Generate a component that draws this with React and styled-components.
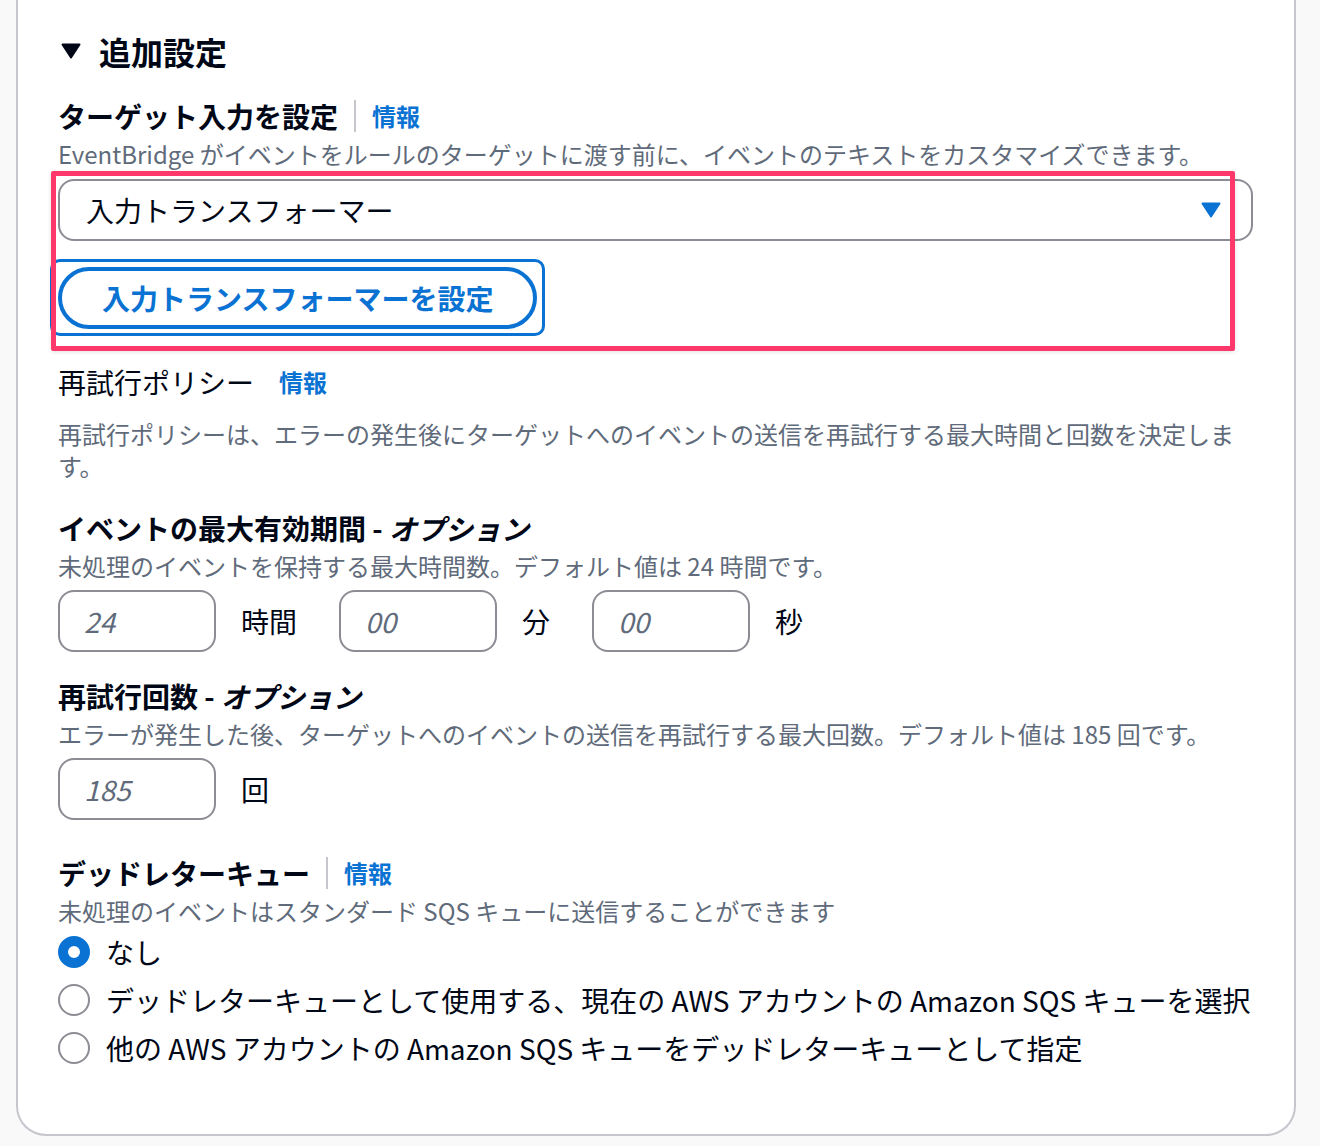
import React from "react";
import styled, { createGlobalStyle } from "styled-components";

const GlobalStyle = createGlobalStyle`
  html, body {
    margin: 0;
    padding: 0;
    background: #f9f9fa;
  }
  body {
    font-family: "Noto Sans CJK JP", "Noto Sans", sans-serif;
    color: #000716;
  }
  * { box-sizing: border-box; }
`;

const Page = styled.div`
  padding: 0 24px 10px 16px;
`;

const Card = styled.section`
  background: #ffffff;
  border: 2px solid #c6c6cd;
  border-top: none;
  border-radius: 0 0 30px 30px;
  padding: 29px 41px 64px 40px;
`;

const Heading = styled.h2`
  display: flex;
  align-items: center;
  gap: 18px;
  margin: 0;
  padding-left: 3px;
  font-size: 32px;
  line-height: 44px;
  font-weight: 700;
`;

const Label = styled.div`
  display: flex;
  align-items: center;
  margin-top: ${(p) => p.$mt || 0}px;
  font-size: 28px;
  line-height: 44px;
  font-weight: ${(p) => (p.$regular ? 400 : 700)};

  em {
    font-style: italic;
  }
`;

const Divider = styled.span`
  width: 2px;
  height: 32px;
  background: #c6c6cd;
  margin: 0 16px;
`;

const InfoLink = styled.a`
  color: #0972d3;
  font-size: 24px;
  font-weight: 700;
  text-decoration: none;
  margin-left: ${(p) => p.$ml || 0}px;
`;

const Desc = styled.p`
  margin: ${(p) => p.$mt || 0}px 0 0;
  font-size: 24px;
  line-height: 32px;
  color: #5f6b7a;
`;

const Highlighted = styled.div`
  position: relative;
  margin-top: 9px;
`;

const Annotation = styled.div`
  position: absolute;
  left: -7px;
  top: -8px;
  width: 1184px;
  height: 180px;
  border: 5px solid #ff386c;
  border-radius: 2px;
  box-shadow: 0 1px 4px rgba(0, 0, 0, 0.12);
  pointer-events: none;
  z-index: 2;
`;

const Select = styled.div`
  display: flex;
  align-items: center;
  justify-content: space-between;
  height: 62px;
  padding: 0 30px 0 26px;
  border: 2px solid #8c8c94;
  border-radius: 16px;
  font-size: 28px;
`;

const OutlineButton = styled.button`
  position: relative;
  margin-top: 26px;
  height: 62px;
  padding: 0 40px;
  border: 4px solid #0972d3;
  border-radius: 31px;
  background: #ffffff;
  color: #0972d3;
  font-family: inherit;
  font-size: 28px;
  font-weight: 700;
  line-height: 1;

  &::before {
    content: "";
    position: absolute;
    inset: -12px -12px -11px -12px;
    border: 3px solid #0972d3;
    border-radius: 10px;
  }
`;

const InputRow = styled.div`
  display: flex;
  align-items: center;
  gap: 42px;
  margin-top: 8px;
`;

const Group = styled.div`
  display: flex;
  align-items: center;
  gap: 25px;
  font-size: 28px;
`;

const NumberInput = styled.input`
  width: 158px;
  height: 62px;
  padding: 0 24px;
  border: 2px solid #8c8c94;
  border-radius: 16px;
  font-family: inherit;
  font-size: 28px;
  background: #ffffff;

  &::placeholder {
    font-style: italic;
    color: #5f6b7a;
  }
`;

const RadioList = styled.div`
  display: flex;
  flex-direction: column;
  gap: 4px;
  margin-top: 3px;
`;

const RadioRow = styled.label`
  display: flex;
  align-items: center;
  gap: 16px;
  font-size: 28px;
  line-height: 44px;
  white-space: nowrap;
`;

const RadioDot = styled.span`
  width: 32px;
  height: 32px;
  border-radius: 50%;
  flex-shrink: 0;
  background: #ffffff;
  border: ${(p) => (p.$checked ? "10px solid #0972d3" : "2px solid #8c8c94")};
`;

const Caret = ({ color }) => (
  <svg width="20" height="16" viewBox="0 0 20 16">
    <polygon
      points="1.5,1.5 18.5,1.5 10,14.5"
      fill={color}
      stroke={color}
      strokeWidth="2"
      strokeLinejoin="round"
    />
  </svg>
);

const App = () => {
  return (
    <Page>
      <GlobalStyle />
      <Card>
        <Heading>
          <Caret color="#000716" />
          追加設定
        </Heading>

        <Label $mt={21}>
          ターゲット入力を設定
          <Divider />
          <InfoLink>情報</InfoLink>
        </Label>
        <Desc>
          EventBridge がイベントをルールのターゲットに渡す前に、イベントのテキストをカスタマイズできます。
        </Desc>
        <Highlighted>
          <Annotation />
          <Select>
            入力トランスフォーマー
            <Caret color="#0972d3" />
          </Select>
          <OutlineButton>入力トランスフォーマーを設定</OutlineButton>
        </Highlighted>

        <Label $mt={31} $regular>
          再試行ポリシー
          <InfoLink $ml={25}>情報</InfoLink>
        </Label>
        <Desc $mt={14}>
          再試行ポリシーは、エラーの発生後にターゲットへのイベントの送信を再試行する最大時間と回数を決定します。
        </Desc>

        <Label $mt={24}>
          イベントの最大有効期間 - <em>&nbsp;オプション</em>
        </Label>
        <Desc>未処理のイベントを保持する最大時間数。デフォルト値は 24 時間です。</Desc>
        <InputRow>
          <Group>
            <NumberInput placeholder="24" />
            時間
          </Group>
          <Group>
            <NumberInput placeholder="00" />
            分
          </Group>
          <Group>
            <NumberInput placeholder="00" />
            秒
          </Group>
        </InputRow>

        <Label $mt={22}>
          再試行回数 - <em>&nbsp;オプション</em>
        </Label>
        <Desc>
          エラーが発生した後、ターゲットへのイベントの送信を再試行する最大回数。デフォルト値は 185 回です。
        </Desc>
        <InputRow>
          <Group>
            <NumberInput placeholder="185" />
            回
          </Group>
        </InputRow>

        <Label $mt={31}>
          デッドレターキュー
          <Divider />
          <InfoLink>情報</InfoLink>
        </Label>
        <Desc>未処理のイベントはスタンダード SQS キューに送信することができます</Desc>
        <RadioList>
          <RadioRow>
            <RadioDot $checked />
            なし
          </RadioRow>
          <RadioRow>
            <RadioDot />
            デッドレターキューとして使用する、現在の AWS アカウントの Amazon SQS キューを選択
          </RadioRow>
          <RadioRow>
            <RadioDot />
            他の AWS アカウントの Amazon SQS キューをデッドレターキューとして指定
          </RadioRow>
        </RadioList>
      </Card>
    </Page>
  );
};

export default App;
